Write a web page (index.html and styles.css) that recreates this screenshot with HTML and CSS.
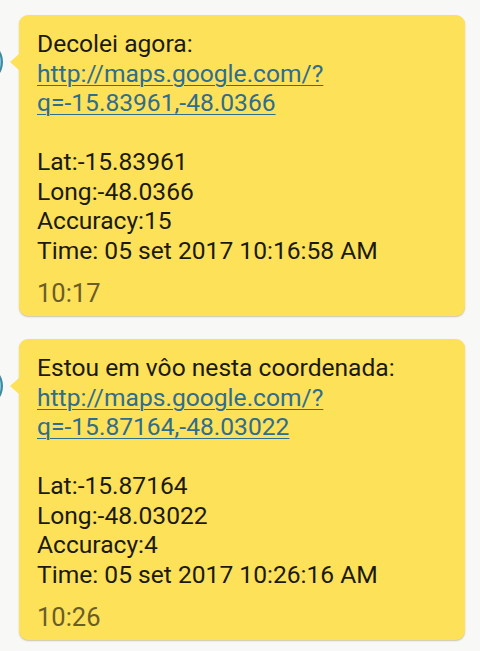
FILE: index.html
```html
<!DOCTYPE html>
<html lang="pt">
<head>
<meta charset="utf-8">
<link rel="stylesheet" href="styles.css">
</head>
<body>
<div class="thread">
  <div class="msg">
    <span class="avatar"></span>
    <div class="bubble">
      <div class="body">Decolei agora:<br><a class="link" href="#">http://maps.google.com/?<br>q=-15.83961,-48.0366</a><br><br>Lat:-15.83961<br>Long:-48.0366<br>Accuracy:15<br>Time: 05 set 2017 10:16:58 AM</div>
      <div class="time">10:17</div>
    </div>
  </div>
  <div class="msg">
    <span class="avatar"></span>
    <div class="bubble">
      <div class="body">Estou em vôo nesta coordenada:<br><a class="link" href="#">http://maps.google.com/?<br>q=-15.87164,-48.03022</a><br><br>Lat:-15.87164<br>Long:-48.03022<br>Accuracy:4<br>Time: 05 set 2017 10:26:16 AM</div>
      <div class="time">10:26</div>
    </div>
  </div>
</div>
</body>
</html>
```
FILE: styles.css
```css
html, body {
  margin: 0;
  background: #f8f8f7;
  height: 100%;
  overflow: hidden;
}
.thread {
  display: flex;
  flex-direction: column;
  gap: 23px;
  padding: 15px 15px 0 19px;
  font-family: Roboto, "Noto Sans", sans-serif;
}
.msg {
  position: relative;
}
.avatar {
  position: absolute;
  left: -52px;
  top: 27px;
  width: 36px;
  height: 40px;
  border-radius: 50%;
  background: #8cc8d8;
  border: 2px solid #3d8aa3;
  box-sizing: border-box;
}
.bubble {
  position: relative;
  width: 446px;
  box-sizing: border-box;
  background: #fde159;
  border-radius: 9px;
  padding: 14px 10px 8px 18px;
  box-shadow: 0 1px 1.5px rgba(120, 100, 20, 0.35);
}
.bubble::before {
  content: "";
  position: absolute;
  left: -9px;
  top: 39px;
  border-top: 8px solid transparent;
  border-bottom: 8px solid transparent;
  border-right: 9px solid #fde159;
}
.body {
  font-size: 24.6px;
  line-height: 29.5px;
  color: #1b1a12;
}
.link {
  color: #2f6d8d;
  text-decoration: underline;
  text-decoration-thickness: 1px;
  text-underline-offset: 3px;
}
.time {
  margin-top: 13px;
  font-size: 25.5px;
  line-height: 30px;
  color: #6b5d26;
}
```
